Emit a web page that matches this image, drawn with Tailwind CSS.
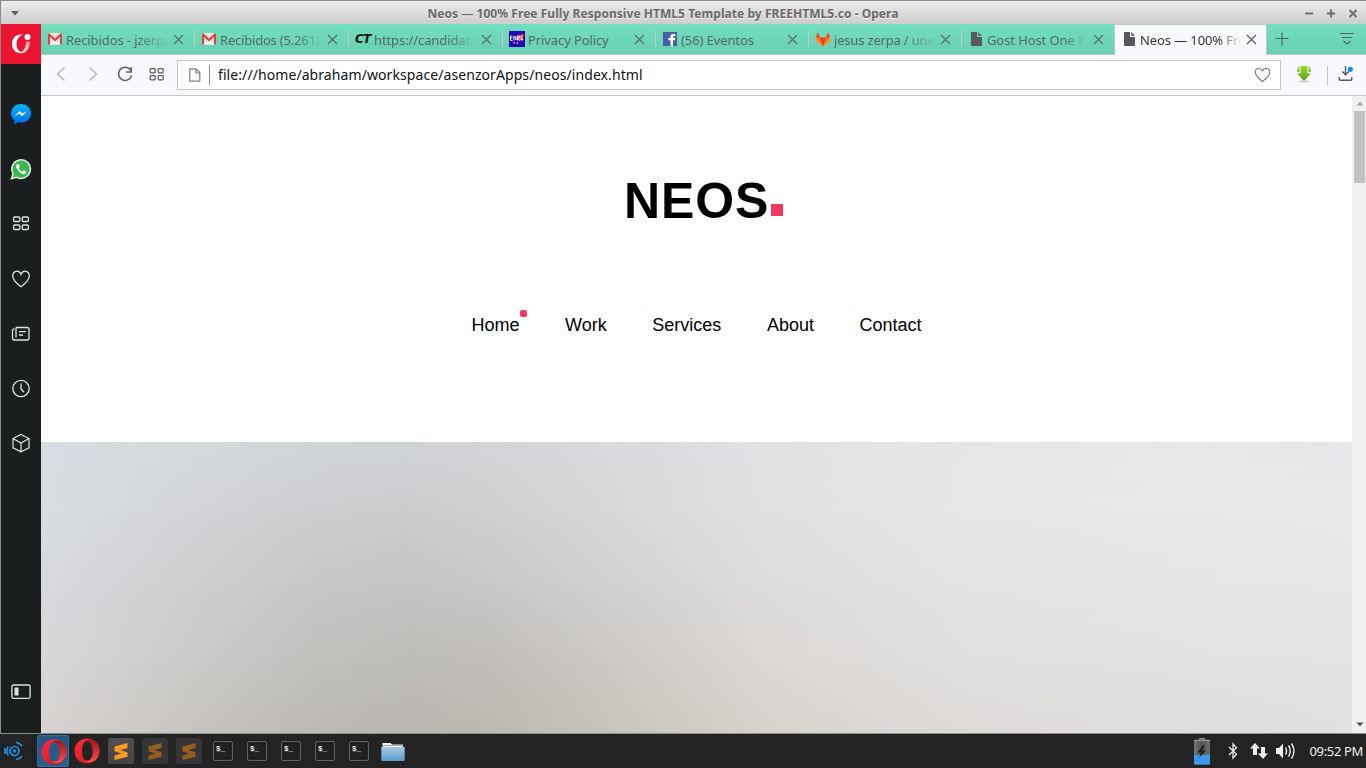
<!DOCTYPE html>
<html lang="en">
<head>
<meta charset="utf-8">
<title>Neos — 100% Free Fully Responsive HTML5 Template by FREEHTML5.co - Opera</title>
<script src="https://cdn.jsdelivr.net/npm/@tailwindcss/browser@4"></script>
</head>
<body class="w-[1366px] h-[768px] overflow-hidden flex flex-col bg-[#232323] font-['Noto_Sans',sans-serif]">
<svg width="0" height="0" class="absolute">
  <defs>
    <linearGradient id="op" x1="0" y1="0" x2="1" y2="1"><stop offset="0" stop-color="#ff2b3c"/><stop offset=".55" stop-color="#e3202c"/><stop offset="1" stop-color="#b0141d"/></linearGradient>
    <linearGradient id="op2" x1="0" y1="0" x2="0" y2="1"><stop offset="0" stop-color="#a0101c"/><stop offset="1" stop-color="#ff5050"/></linearGradient>
    <linearGradient id="ms" x1="0" y1="0" x2="0" y2="1"><stop offset="0" stop-color="#00b8ff"/><stop offset="1" stop-color="#0068f0"/></linearGradient>
    <linearGradient id="gr" x1="0" y1="0" x2="0" y2="1"><stop offset="0" stop-color="#a6d83c"/><stop offset="1" stop-color="#5a9c10"/></linearGradient>
    <linearGradient id="fo" x1="0" y1="0" x2="0" y2="1"><stop offset="0" stop-color="#a9cbe4"/><stop offset="1" stop-color="#5799cc"/></linearGradient>
    <linearGradient id="ba" x1="0" y1="0" x2="1" y2="0"><stop offset="0" stop-color="#777"/><stop offset=".4" stop-color="#555"/><stop offset="1" stop-color="#6c6c6c"/></linearGradient>
    <linearGradient id="oc" x1="0" y1="0" x2="0" y2="1"><stop offset="0" stop-color="#e8899a"/><stop offset="1" stop-color="#f2eaea"/></linearGradient>
  </defs>
  <symbol id="x" viewBox="0 0 11 11"><path d="M1 1l9 9M10 1l-9 9" stroke="currentColor" stroke-width="1.1" fill="none"/></symbol>
  <symbol id="gmail" viewBox="0 0 14 12"><path d="M0 0h14v11.500H0z" fill="#e6e4e4"/><path d="M2 11.500l5-5.500 5 5.500z" fill="#f6f5f5"/><path d="M0 11.500V.5Q.6 0 1.300.2L7 5.500 12.700.2Q13.500 0 14 .5v11h-2V4L7 8.500 2 4v7.500z" fill="#d8453a"/></symbol>
  <symbol id="doc" viewBox="0 0 11 14"><path d="M1 0h5v5h5v8q0 1-1 1H1q-1 0-1-1V1q0-1 1-1zM7.200 0L11 3.800H7.200z" fill="#58595b"/></symbol>
  <symbol id="term" viewBox="0 0 20 20"><rect x=".75" y=".75" width="18.500" height="18.500" rx="1" fill="#202221" stroke="#747674" stroke-width="1"/><rect x="2" y="2" width="16" height="16" fill="none" stroke="#111" stroke-width=".8"/><text x="3" y="9.500" font-family="Liberation Mono" font-weight="bold" font-size="7.500" fill="#eee">$_</text></symbol>
  <symbol id="opera" viewBox="0 0 26 26"><path fill-rule="evenodd" fill="url(#op)" d="M13 .5C20 .5 25.500 5.500 25.500 13S20 25.500 13 25.500.5 20.500.5 13 6 .5 13 .5zM13.300 3.200C9.800 3.200 8 7.500 8 13s1.800 9.800 5.300 9.800 5.300-4.300 5.300-9.800-1.800-9.800-5.300-9.800z"/><path d="M10 4.500C13 1 18 .8 22 4.500 26.500 9 26.500 17 22 21.500 18 25 13 25 10 21.500c5 3.500 9.500-1 9.500-8.500S15 1 10 4.500z" fill="url(#op2)"/></symbol>
  <symbol id="sub" viewBox="0 0 26 26"><path d="M6.500 8.500L19.500 5v5l-7 2 7 2.500v4.200L6.500 22v-4.500l7-2-7-2.300z" fill="currentColor"/></symbol>
</svg>

<div class="h-[734px] shrink-0 flex flex-col border-l border-[#8a8a8a] border-b border-b-[#8d8f8c]">
  <!-- title bar -->
  <header class="h-6 shrink-0 border-t border-[#8b898b] bg-linear-to-b from-[#ececec] to-[#cdcdcd] flex items-center pl-[9px] pr-2">
    <svg width="10" height="6" viewBox="0 0 10 6"><path d="M1 1h8L5 5.500z" fill="#5f5f5f"/></svg>
    <h1 class="flex-1 text-center text-[12px] leading-[23px] pt-[2px] pl-[2px] font-bold text-[#6a6a6a] whitespace-nowrap [text-shadow:0_1px_0_#f4f4f4] tracking-[0.05px]">Neos — 100% Free Fully Responsive HTML5 Template by FREEHTML5.co - Opera</h1>
    <svg width="54" height="12" viewBox="0 0 54 12" fill="none" stroke="#6c6c6c" stroke-width="2"><path d="M1 6.500h8M23 6.500h8M27 2.500v8M45.500 3l7 7M52.500 3l-7 7"/></svg>
  </header>

  <div class="flex flex-1 min-h-0">
    <!-- sidebar -->
    <nav class="w-10 shrink-0 bg-[#1b1e1e] flex flex-col items-center text-[#e2e4e4]">
      <div class="w-10 h-10 shrink-0 bg-[#ea1430] flex items-center justify-center">
        <svg width="22" height="22" viewBox="0 0 22 22"><path fill="#fff" d="M13 1.800C7 .5 2 4.500 2 10.800 2 16.500 6 20.300 10.800 20.300q2.400 0 4.200-1.300C10 20.500 6.500 16.500 6.500 11c0-4.500 2.700-8.300 6.500-9.200z"/><path fill="url(#oc)" d="M16 8.500h3.800c.4 5.500-2.800 11.800-9 11.800q-1.800 0-3.300-.8c5.300.5 8.500-4 8.500-11z"/><circle cx="17.500" cy="4" r="3" fill="#fff"/></svg>
      </div>
      <svg class="mt-[39px] shrink-0" width="22" height="22" viewBox="0 0 22 22"><path d="M11 1C5.300 1 1 5 1 10.400c0 3 1.300 5.300 3.500 7V21.500l3.600-2.300q1.400.4 2.900.4c5.700 0 10-4 10-9.200S16.700 1 11 1z" fill="url(#ms)"/><path d="M4.500 13.200L9.500 8l2.800 2.500L17 8l-5 5.200-2.600-2.600z" fill="#fff"/></svg>
      <svg class="mt-[33px] shrink-0" width="22" height="22" viewBox="0 0 22 22"><path d="M1.500 20.700L3 15.600A9.300 9.300 0 1 1 6.800 19.300z" fill="#3cb64e" stroke="#e8ece8" stroke-width="1.500"/><path d="M7.500 6c-2 1-1.500 3.500 0 5.500 2 3 4 4.300 6 4.500 2 0 3-1.400 2.500-2.500l-2.300-1.200-1.300 1.400c-1.700-.6-3-2-3.700-3.500l1-1.200L8.600 6z" fill="#fff"/></svg>
      <svg class="mt-[33px] mr-px shrink-0" width="20" height="20" viewBox="0 0 20 20" fill="none" stroke="currentColor" stroke-width="1.300"><rect x="2.600" y="4" width="6.200" height="4.500" rx="1"/><rect x="11.200" y="4" width="6.200" height="4.500" rx="1"/><rect x="2.600" y="12" width="6.200" height="4.500" rx="1"/><rect x="11.200" y="12" width="6.200" height="4.500" rx="1"/></svg>
      <svg class="mt-[36px] mr-px shrink-0" width="20" height="20" viewBox="0 0 20 20" fill="none" stroke="currentColor" stroke-width="1.300"><path d="M10 17.800C7 15.500 1.700 11.500 1.700 7c0-5.500 6.500-6.500 8.300-1.700C11.800.5 18.300 1.500 18.300 7c0 4.500-5.300 8.500-8.300 10.800z"/></svg>
      <svg class="mt-[35px] mr-px shrink-0" width="20" height="20" viewBox="0 0 20 20" fill="none" stroke="currentColor" stroke-width="1.300"><path d="M5 3.500h11q2 0 2 2V14q0 2-2 2H3.500q-2 0-2-2V6.500q0-1.700 2-1.700M5 3.500v10M8 7.700h7M8 11h4"/></svg>
      <svg class="mt-[35px] mr-px shrink-0" width="20" height="20" viewBox="0 0 20 20" fill="none" stroke="currentColor" stroke-width="1.300"><circle cx="10" cy="9.500" r="8.200"/><path d="M10 4.500V10l3 3.200"/></svg>
      <svg class="mt-[34px] mr-px shrink-0" width="20" height="20" viewBox="0 0 20 20" fill="none" stroke="currentColor" stroke-width="1.200"><path d="M10 1.500l8 4v9.300l-8 4-8-4V5.500zM2 5.500L10 10l8-4.500M10 10v8.800"/></svg>
      <svg class="mt-[229px] mr-px shrink-0" width="20" height="20" viewBox="0 0 20 20" fill="none" stroke="currentColor" stroke-width="1.300"><rect x=".9" y="3" width="18.200" height="13.300" rx="1.500"/><rect x="3.500" y="5.500" width="4" height="8" rx=".5" fill="currentColor" stroke="none"/></svg>
    </nav>

    <div class="flex-1 min-w-0 flex flex-col">
      <!-- tab strip -->
      <div class="h-[31px] shrink-0 flex bg-linear-to-b from-[#72dfbf] to-[#69ceb0] text-[13px] leading-[18px] tracking-[-0.1px] text-[#536b64]">
        <div class="flex flex-1 border-b border-[#bcc9c6] pl-px">
          <div class="w-[152px] flex items-center pl-1.5">
            <svg width="14" height="12" class="shrink-0"><use href="#gmail"/></svg>
            <span class="ml-1 w-[101px] overflow-hidden whitespace-nowrap mask-[linear-gradient(to_right,#000_72%,transparent_101%)] pt-[2px]">Recibidos - jzerpa</span>
            <svg width="11" height="11" class="ml-[6px] shrink-0"><use href="#x"/></svg>
          </div>
          <div class="w-[154px] flex items-center"><i class="w-px h-4 bg-[#c7c7cb]"></i>
            <svg width="14" height="12" class="shrink-0 ml-[7px]"><use href="#gmail"/></svg>
            <span class="ml-1 w-[100px] overflow-hidden whitespace-nowrap tracking-[-0.2px] mask-[linear-gradient(to_right,#000_76%,transparent_104%)] pt-[2px]">Recibidos (5.261)</span>
            <svg width="11" height="11" class="ml-[7px] shrink-0"><use href="#x"/></svg>
          </div>
          <div class="w-[154px] flex items-center"><i class="w-px h-4 bg-[#c7c7cb]"></i>
            <b class="w-[18px] ml-[6px] text-[12px] italic font-bold text-[#111] font-['DejaVu_Sans'] tracking-[-0.7px]">CT</b>
            <span class="ml-px w-[101px] overflow-hidden whitespace-nowrap mask-[linear-gradient(to_right,#000_75%,transparent_100%)] pt-[2px]">https://candidato</span>
            <svg width="11" height="11" class="ml-[6px] shrink-0"><use href="#x"/></svg>
          </div>
          <div class="w-[153px] flex items-center"><i class="w-px h-4 bg-[#c7c7cb]"></i>
            <svg width="16" height="16" viewBox="0 0 16 16" class="shrink-0 ml-[6px]"><path d="M0 0h16v16H0z" fill="#2405b4"/><path d="M8 4.500L15.500 2.500l-2 6-4 2z" fill="#e31c3a"/><path d="M1.500 5v4.500M1.500 5h2M1.500 7h2M1.500 9.500h2M5 9.500V5l2 4V5M8.500 9.500V5h2v2h-2l2 2.500M14 5h-2v4h1.500V7" fill="none" stroke="#fff" stroke-width=".9"/><path d="M4 11l2 .3-1 1.500zM9 11l-2.500 2L9 12.500z" fill="#fff"/></svg>
            <span class="ml-[3px] w-[101px] whitespace-nowrap pt-[2px]">Privacy Policy</span>
            <svg width="11" height="11" class="ml-[5px] shrink-0"><use href="#x"/></svg>
          </div>
          <div class="w-[153px] flex items-center"><i class="w-px h-4 bg-[#c7c7cb]"></i>
            <svg width="14" height="14" viewBox="0 0 14 14" class="shrink-0 ml-[7px]"><path d="M0 0h14v14H0z" fill="#4660a2"/><path d="M7.500 14V8.300H5.300V6h2.200V4.500Q7.500 2 10 2h2.300v2.200h-1.500q-.8 0-.8.800v1h2.200l-.3 2.300H10V14z" fill="#fff"/></svg>
            <span class="ml-1 w-[101px] whitespace-nowrap pt-[2px]">(56) Eventos</span>
            <svg width="11" height="11" class="ml-[5px] shrink-0"><use href="#x"/></svg>
          </div>
          <div class="w-[153px] flex items-center"><i class="w-px h-4 bg-[#c7c7cb]"></i>
            <svg width="16" height="15" viewBox="0 0 16 15" class="shrink-0 ml-[6px]"><path d="M8 14.500L0 8.500 2.800.5l2.300 5h5.800l2.300-5L16 8.500z" fill="#fc9a28"/><path d="M8 14.500L1.500 5.500h3.600zM8 14.500l6.500-9h-3.600z" fill="#fc6d26"/><path d="M8 14.500l-3-9h6zM2.800.5L1 5.500h4zM13.200.5l1.800 5h-4z" fill="#e24329"/></svg>
            <span class="ml-[3px] w-[101px] overflow-hidden whitespace-nowrap tracking-[-0.18px] mask-[linear-gradient(to_right,#000_72%,transparent_102%)] pt-[2px]">jesus zerpa / unec</span>
            <svg width="11" height="11" class="ml-[5px] shrink-0"><use href="#x"/></svg>
          </div>
          <div class="w-[152px] flex items-center"><i class="w-px h-4 bg-[#c7c7cb]"></i>
            <svg width="11" height="14" class="shrink-0 ml-[9px]"><use href="#doc"/></svg>
            <span class="ml-[5px] w-[100px] overflow-hidden whitespace-nowrap mask-[linear-gradient(to_right,#000_78%,transparent_99%)] pt-[2px]">Gost Host One Page</span>
            <svg width="11" height="11" class="ml-[6px] shrink-0"><use href="#x"/></svg>
          </div>
        </div>
        <div class="w-[153px] shrink-0 flex items-center bg-[#f8f9fc] border-t border-l border-r border-[#c0c6c8] text-[#333]">
          <svg width="11" height="14" class="shrink-0 ml-[9px] -mt-[3px]"><use href="#doc"/></svg>
          <span class="ml-[5px] w-[101px] overflow-hidden whitespace-nowrap mask-[linear-gradient(to_right,#000_78%,transparent_101%)]">Neos — 100% Free</span>
          <svg width="11" height="11" class="ml-[5px] -mt-px shrink-0 text-[#555]"><use href="#x"/></svg>
        </div>
        <div class="w-[99px] shrink-0 border-b border-[#bcc9c6] flex items-center justify-between pl-[8px] pr-[11px] text-[#4d655f]">
          <svg class="-mt-px" width="14" height="14" viewBox="0 0 14 14"><path d="M7 .5v13M.5 6.500h13" stroke="currentColor" stroke-width="1.200"/></svg>
          <svg width="16" height="14" viewBox="0 0 16 14" fill="none" stroke="currentColor" stroke-width="1.200"><path d="M1 1.500h14M3 5.500h10M4.500 9L8 12l3.500-3"/></svg>
        </div>
      </div>
      <!-- toolbar -->
      <div class="h-[41px] shrink-0 flex items-center bg-[#f8f9fc] border-b border-[#c4c6ca] text-[#5c5e62]">
        <svg class="ml-[14px] -mt-[2px]" width="12" height="16" viewBox="0 0 12 16"><path d="M9.500 1.500L2.500 8l7 6.500" fill="none" stroke="#b0b2b5" stroke-width="1.400"/></svg>
        <svg class="ml-[20px] -mt-[2px]" width="12" height="16" viewBox="0 0 12 16"><path d="M2.500 1.500L9.500 8l-7 6.500" fill="none" stroke="#b0b2b5" stroke-width="1.400"/></svg>
        <svg class="ml-[17px] -mt-[2px]" width="18" height="18" viewBox="0 0 18 18" fill="none" stroke="currentColor" stroke-width="1.500"><path d="M14.500 5A6.600 6.600 0 1 0 15.500 10.500M15.200 2v5h-5"/></svg>
        <svg class="ml-[15px] -mt-[2px]" width="16" height="14" viewBox="0 0 16 14" fill="none" stroke="currentColor" stroke-width="1.300"><rect x="1.200" y="1.600" width="5" height="4.200" rx=".8"/><rect x="9.200" y="1.600" width="5" height="4.200" rx=".8"/><rect x="1.200" y="8.600" width="5" height="4.200" rx=".8"/><rect x="9.200" y="8.600" width="5" height="4.200" rx=".8"/></svg>
        <div class="ml-[12px] w-[1104px] h-[30px] shrink-0 bg-white border border-[#c4c6ca] flex items-center">
          <svg class="ml-[11px]" width="12" height="14" viewBox="0 0 12 14" fill="none" stroke="#808285" stroke-width="1.200"><path d="M.8.8h6.300L10.800 4.500v8.700H.8zM6.800 1v4h4"/></svg>
          <i class="ml-[8px] w-px h-5 bg-[#8b8d90]"></i>
          <span class="ml-[8px] text-[14px] leading-5 tracking-[0.08px] text-[#111] whitespace-nowrap">file:///home/abraham/workspace/asenzorApps/neos/index.html</span>
          <svg class="ml-auto mr-[9px]" width="17" height="16" viewBox="0 0 17 16" fill="none" stroke="#6d6f72" stroke-width="1.100"><path d="M8.500 14.500C6 12.500 1.300 9 1.300 5.300 1.300.8 7 .2 8.500 3.800 10 .2 15.700.8 15.700 5.300c0 3.700-4.700 7.200-7.200 9.200z"/></svg>
        </div>
        <svg class="ml-[15px] -mt-[2px] shrink-0" width="16" height="18" viewBox="0 0 16 18"><ellipse cx="8" cy="16.500" rx="5" ry="1" fill="#ccc"/><path d="M4.500 1h7v7.500H15L8 16 1 8.500h3.500zM2 1.500h1.500V7H1V4.500h1zM14 1.500h-1.500V7H15V4.500h-1z" fill="url(#gr)"/></svg>
        <i class="ml-[15px] w-px h-[19px] bg-[#bfc1c5]"></i>
        <svg class="ml-[10px] -mt-[3px] shrink-0" width="17" height="17" viewBox="0 0 17 17" fill="none" stroke="#55575b" stroke-width="1.400"><path d="M7.500 1v8.500M4.200 6.500l3.300 3.200 3.300-3.200M1.200 12v2q0 1.200 1.200 1.200h10.200q1.200 0 1.200-1.200v-2"/><circle cx="12.300" cy="4.300" r="2.600" fill="#0a90f5" stroke="none"/></svg>
      </div>
      <!-- page -->
      <div class="flex-1 min-h-0 flex">
        <main class="flex-1 min-w-0 flex flex-col bg-white font-['Liberation_Sans',sans-serif] text-black">
          <div class="h-[346px] shrink-0 flex flex-col">
            <div class="pt-[75px] pl-[583px] flex items-end">
              <span class="w-[147px] text-[50px] leading-[60px] font-bold tracking-[0.9px]">NEOS</span>
              <i class="size-3 mb-[15px] bg-[#f23860]"></i>
            </div>
            <div class="mt-[81px] pl-[430.5px] flex text-[18px] leading-[26px]">
              <a class="w-[93.5px] relative">Home<i class="absolute left-[48.500px] top-[-2px] size-[7px] rounded-[2px] bg-[#f23860]"></i></a>
              <a class="w-[87.3px]">Work</a>
              <a class="w-[114.7px]">Services</a>
              <a class="w-[92.5px]">About</a>
              <a>Contact</a>
            </div>
          </div>
          <!-- hero backdrop: stacked horizontal gradients blended vertically -->
          <div class="flex-1 grid bg-[linear-gradient(to_right,#d8dde3,#d4d9dc_13%,#d1d5d8_21%,#d1d4d7_28%,#d5d4d9_34%,#dadadf_45%,#e2e2e6_55%,#e6e6e6_71%,#e8e8e8_88%,#e6e6eb)]">
            <div class="[grid-area:1/1] bg-[linear-gradient(to_right,#d8dde0,#d2d2d6_13%,#cdcdd0_21%,#cbcbcd_28%,#cecfcf_34%,#d8d8d8_45%,#e0e0e0_55%,#e6e6e6_71%,#e8e8e8)] mask-[linear-gradient(transparent,#000_25%)]"></div>
            <div class="[grid-area:1/1] bg-[linear-gradient(to_right,#d8d8de,#cccdcd_13%,#c5c6c6_21%,#c3c4c4_28%,#c6c7c7_34%,#d2d2d2_45%,#dcdcdc_55%,#e3e3e3_71%,#e6e6e6)] mask-[linear-gradient(transparent_25%,#000_50%)]"></div>
            <div class="[grid-area:1/1] bg-[linear-gradient(to_right,#d7d7d8,#c8c9c7_13%,#c0c1bd_21%,#bdbcb8_28%,#c1bdb9_34%,#cecac6_45%,#dcd7d4_55%,#e0e0e0_71%,#e3e3e3)] mask-[linear-gradient(transparent_50%,#000_75%)]"></div>
            <div class="[grid-area:1/1] bg-[linear-gradient(to_right,#d7d2d0,#c5c1bc_13%,#bcb8b3_21%,#b9b5b0_28%,#bcb9b0_35%,#c9c6bc_45%,#d6d1ca_55%,#dedad8_71%,#e0e0e0)] mask-[linear-gradient(transparent_75%,#000)]"></div>
          </div>
        </main>
        <div class="w-[14px] shrink-0 bg-[#f1f1f1] flex flex-col items-center pl-px">
          <svg class="mt-[5px]" width="8" height="5" viewBox="0 0 8 5"><path d="M.5 4.500L4 .8l3.500 3.700z" fill="#a3a3a3"/></svg>
          <div class="mt-[5px] w-[11px] h-[72px] bg-[#c1c1c1]"></div>
          <svg class="mt-auto mb-[6px]" width="8" height="5" viewBox="0 0 8 5"><path d="M.5.5L4 4.200 7.500.5z" fill="#505050"/></svg>
        </div>
      </div>
    </div>
  </div>
</div>

<!-- taskbar -->
<footer class="h-[34px] shrink-0 flex items-center pl-1 bg-[#232323]">
  <svg width="20" height="20" viewBox="0 0 20 20" fill="none" stroke="#1592ee" stroke-width="1.700"><circle cx="10.500" cy="10" r="1.700" fill="#1592ee" stroke="none"/><circle cx="10.500" cy="10" r="4.500"/><path d="M12 1.300A9 9 0 0 1 18 5M18 15A9 9 0 0 1 12 18.700M4.300 5.500A8 8 0 0 0 4.300 14.500M1 7v6"/></svg>
  <svg class="ml-[7px]" width="4" height="10" viewBox="0 0 4 10"><path d="M0 1.500h4M0 5h4M0 8.500h4" stroke="#151515"/></svg>
  <div class="ml-[2px] w-8 h-8 rounded-[2px] bg-linear-to-b from-[#285582] to-[#2a5e91] border border-[#376c9f] flex items-center justify-center"><svg width="26" height="26" class="mt-px ml-px"><use href="#opera"/></svg></div>
  <svg class="ml-[5px]" width="26" height="26"><use href="#opera"/></svg>
  <div class="ml-2 size-[26px] rounded-[2px] bg-linear-to-b from-[#505050] to-[#444] text-[#ff9a1c]"><svg width="26" height="26"><use href="#sub"/></svg></div>
  <div class="ml-2 size-[26px] rounded-[2px] bg-[#363636] text-[#965f20]"><svg width="26" height="26"><use href="#sub"/></svg></div>
  <div class="ml-2 size-[26px] rounded-[2px] bg-[#363636] text-[#965f20]"><svg width="26" height="26"><use href="#sub"/></svg></div>
  <div class="flex gap-[14px] ml-[11px]">
    <svg width="20" height="20"><use href="#term"/></svg>
    <svg width="20" height="20"><use href="#term"/></svg>
    <svg width="20" height="20"><use href="#term"/></svg>
    <svg width="20" height="20"><use href="#term"/></svg>
    <svg width="20" height="20"><use href="#term"/></svg>
  </div>
  <svg class="ml-3 mt-[2px]" width="24" height="20" viewBox="0 0 24 20"><path d="M1.500 1h8l1.500 1.500h11V7H1.500z" fill="#eee"/><path d="M2 3.500h20" stroke="#b9a99c"/><path d="M.3 5h23.400v13q0 1-1 1H1.300q-1 0-1-1z" fill="url(#fo)"/></svg>
  <div class="ml-auto flex items-center pr-[3px] text-[#eee]">
    <svg width="18" height="28" viewBox="0 0 18 28"><path d="M6 1h6v2H6z" fill="#888"/><rect x="1" y="2.500" width="16" height="25" rx="1.500" fill="url(#ba)"/><path d="M1 18h16v8q0 1.500-1.500 1.500h-13Q1 27.500 1 26z" fill="#3d9af0"/><path d="M1 3.500h16" stroke="#999"/><path d="M10 8l-5.500 7.500H8L6 21l7-7.500H9.500L12 8z" fill="#222"/></svg>
    <svg class="ml-[16px]" width="12" height="18" viewBox="0 0 12 18" fill="none" stroke="currentColor" stroke-width="1.300"><path d="M2 5l7.500 7.300L6 16V2l3.500 3.700L2 13"/></svg>
    <svg class="ml-[10px]" width="20" height="18" viewBox="0 0 20 18" fill="currentColor"><path d="M6 1L1 6.500h3V13h4V6.500h3zM14 17l5-5.500h-3V5h-4v6.500H9z"/></svg>
    <svg class="ml-[7px]" width="20" height="18" viewBox="0 0 20 18" fill="none" stroke="currentColor" stroke-width="1.400"><path d="M0 6h3l4-4.500v15L3 12H0z" fill="currentColor" stroke="none"/><path d="M9.500 5.500q2 3.500 0 7M12.500 3.500q3.500 5.500 0 11M15.500 1.500q5 7.500 0 15"/></svg>
    <span class="ml-[14px] text-[13px] leading-[18px] tracking-[-0.35px] whitespace-nowrap">09:52 PM</span>
  </div>
</footer>
</body>
</html>
